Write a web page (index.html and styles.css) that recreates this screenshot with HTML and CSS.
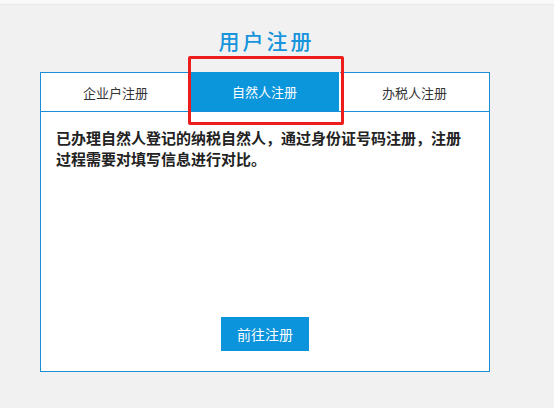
FILE: index.html
```html
<!DOCTYPE html>
<html lang="zh-CN">
<head>
<meta charset="utf-8">
<title>用户注册</title>
<link rel="stylesheet" href="styles.css">
</head>
<body>
<div class="topbar"></div>
<div class="wrap">
  <h1 class="title">用户注册</h1>
  <div class="panel">
    <div class="tabs">
      <div class="tab">企业户注册</div>
      <div class="tab active">自然人注册</div>
      <div class="tab">办税人注册</div>
    </div>
    <div class="content">
      <p class="desc">已办理自然人登记的纳税自然人，通过身份证号码注册，注册过程需要对填写信息进行对比。</p>
      <button class="btn">前往注册</button>
    </div>
    <div class="highlight"></div>
  </div>
</div>
</body>
</html>
```

FILE: styles.css
```css
html, body {
  margin: 0;
  padding: 0;
}
body {
  background: #f1f1f1;
  font-family: "Noto Sans CJK SC", "Noto Sans", sans-serif;
  color: #333;
}
.topbar {
  height: 4px;
  background: #f9f9f9;
  border-bottom: 1px solid #e9e9e9;
}
.wrap {
  width: 450px;
  margin-left: 40px;
}
.title {
  margin: 24px 0 21px;
  font-size: 21px;
  line-height: 22px;
  font-weight: 500;
  letter-spacing: 3px;
  text-indent: 3px;
  text-align: center;
  color: #1694dc;
}
.panel {
  position: relative;
  box-sizing: border-box;
  height: 300px;
  background: #fff;
  border: 1px solid #1a8fd8;
  display: flex;
  flex-direction: column;
}
.tabs {
  display: flex;
  height: 38px;
  border-bottom: 1px solid #1a8fd8;
}
.tab {
  flex: 1;
  display: flex;
  align-items: center;
  justify-content: center;
  font-size: 13px;
  color: #333;
}
.tab.active {
  background: #0b96dc;
  color: #fff;
  margin-top: -1px;
  border-right: 1px solid #fff;
}
.content {
  flex: 1;
  display: flex;
  flex-direction: column;
  align-items: center;
  padding: 15px 15px 20px;
}
.desc {
  align-self: stretch;
  margin: 0;
  font-size: 15px;
  line-height: 21px;
  font-weight: bold;
  color: #222;
}
.btn {
  margin-top: auto;
  width: 88px;
  height: 34px;
  border: 0;
  background: #0b93db;
  color: #fff;
  font-family: "Noto Sans CJK SC", "Noto Sans", sans-serif;
  font-size: 14px;
  padding: 0;
}
.highlight {
  position: absolute;
  left: 147px;
  top: -17px;
  width: 150px;
  height: 63px;
  border: 3px solid #ee1d1d;
  border-radius: 2px;
  pointer-events: none;
}
```
